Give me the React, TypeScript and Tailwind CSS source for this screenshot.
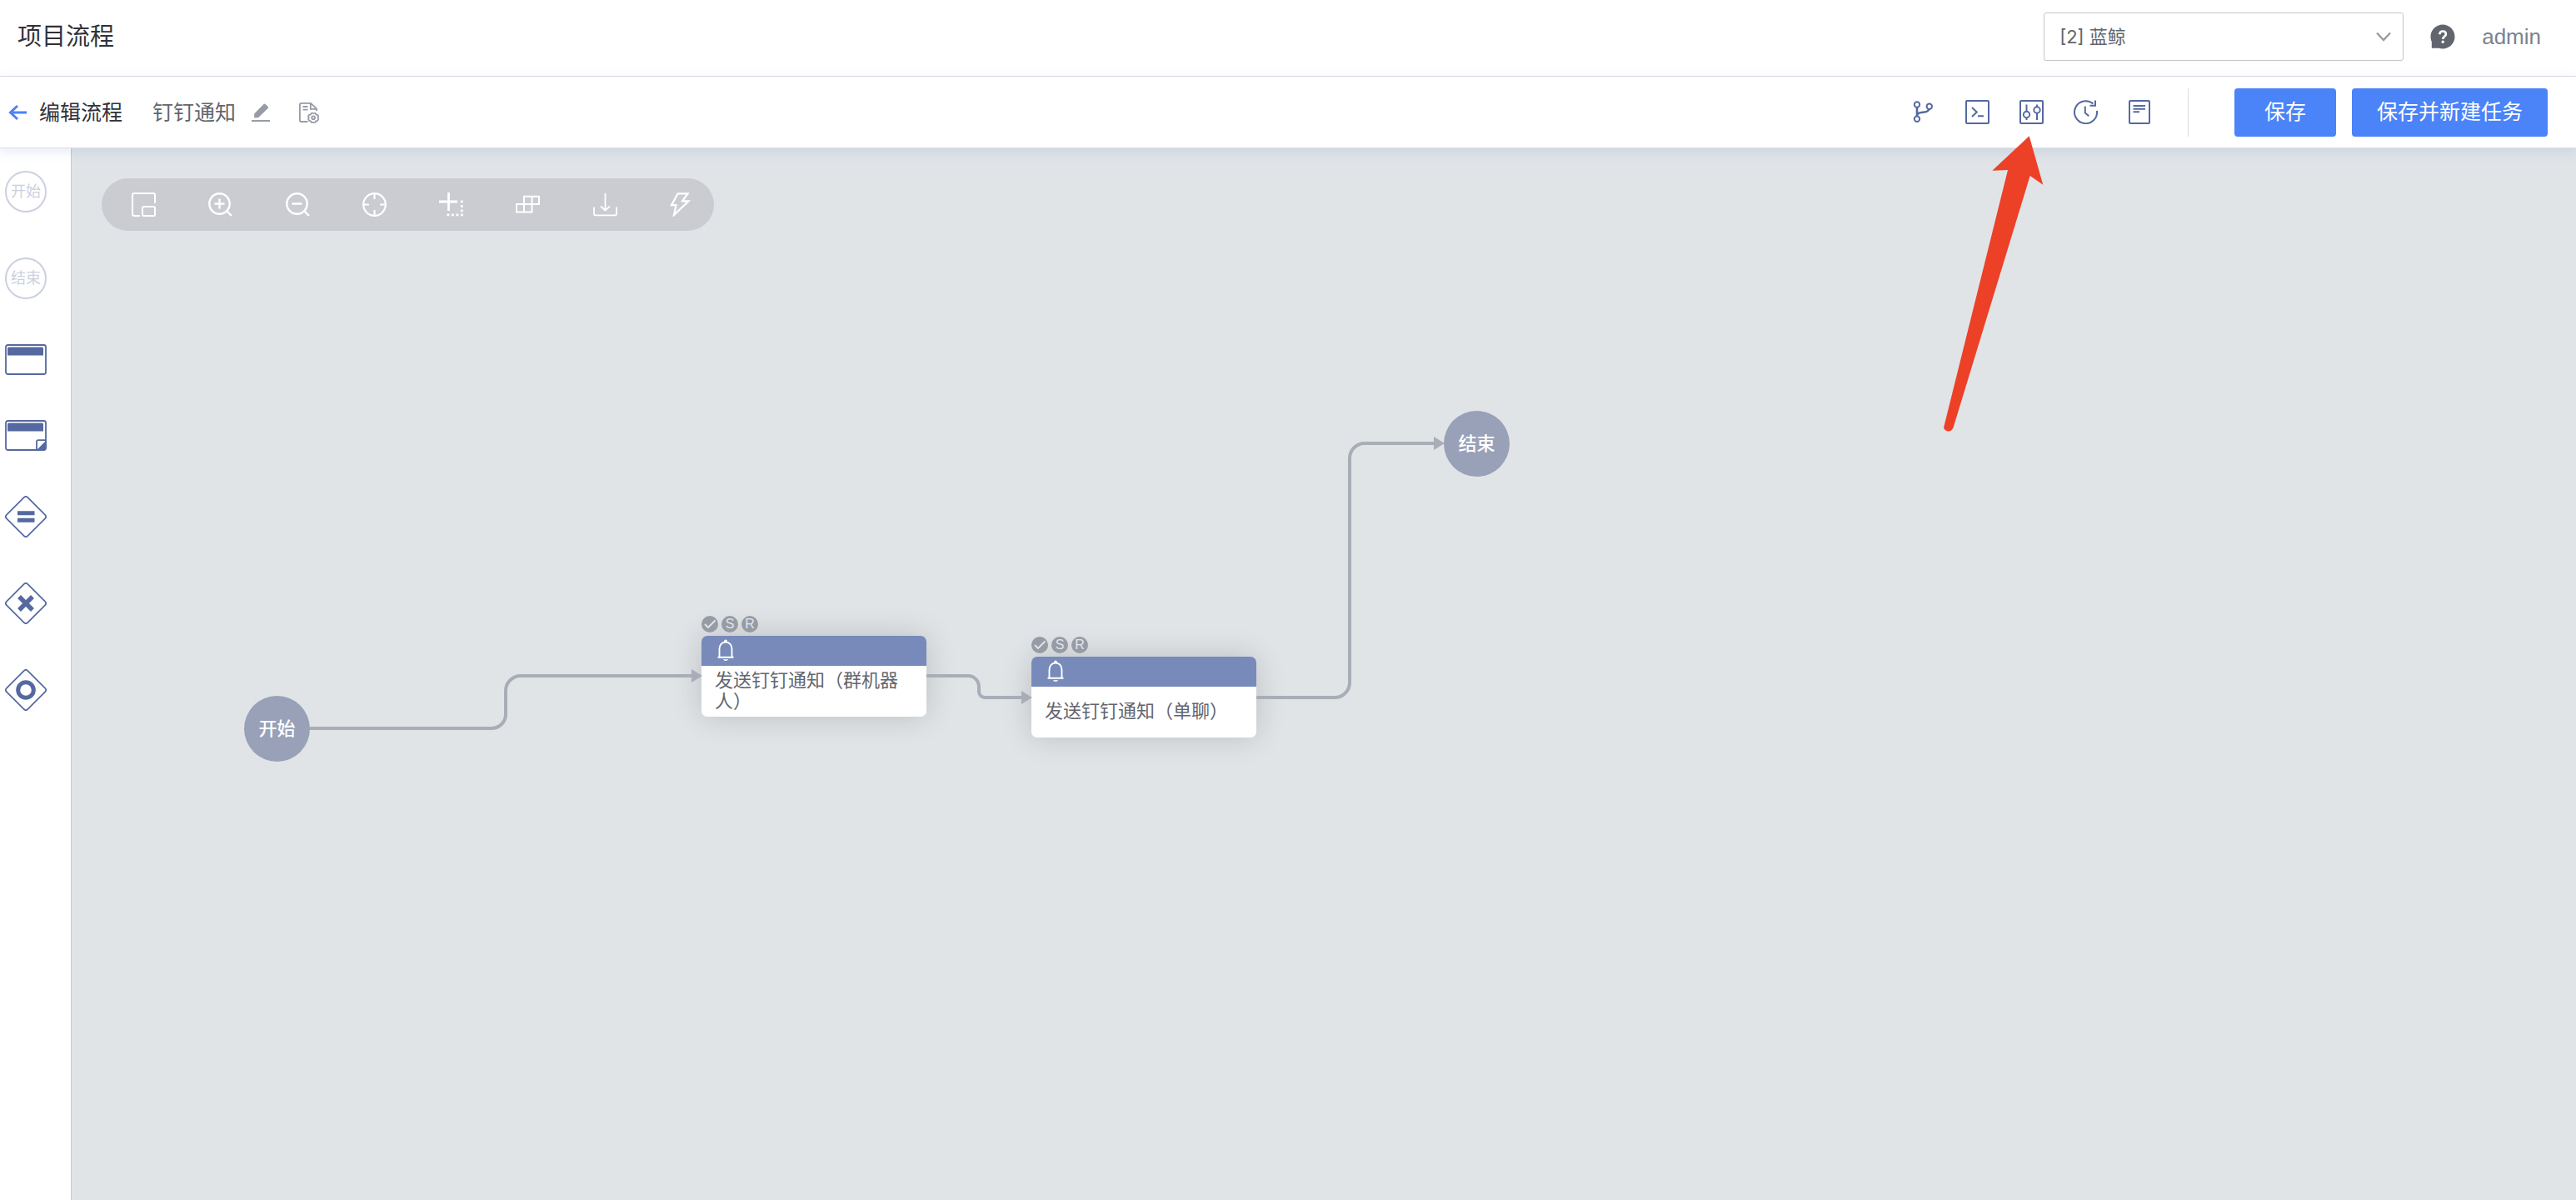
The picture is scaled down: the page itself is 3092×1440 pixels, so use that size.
import type { ReactNode } from "react";

const FONT = 'font-["Liberation_Sans","Noto_Sans_CJK_SC",sans-serif]';

function Glyph({ children, size = "size-[29px]", sw = 2 }: { children: ReactNode; size?: string; sw?: number }) {
  return (
    <svg viewBox="0 0 29 29" className={size} fill="none" stroke="currentColor" strokeWidth={sw} aria-hidden="true">
      {children}
    </svg>
  );
}

function IconButton({ label, children }: { label: string; children: ReactNode }) {
  return (
    <button type="button" aria-label={label} title={label} className="flex shrink-0 items-center justify-center">
      {children}
    </button>
  );
}

function TopHeader() {
  return (
    <header className="flex h-[92px] shrink-0 items-center border-b border-[#dcdee5] bg-white pb-[3px] pl-[21px] pr-[42px]">
      <h1 className="text-[29px] leading-10 text-[#313238]">项目流程</h1>
      <div className="relative ml-auto w-[432px]">
        <select
          aria-label="项目"
          className='h-[58px] w-full appearance-none rounded-[3px] border border-[#c4c6cc] bg-white pl-[18px] pr-12 font-["Inter","Noto_Sans_CJK_SC",sans-serif] text-[22px] text-[#63656e]'
        >
          <option>[2] 蓝鲸</option>
        </select>
        <svg viewBox="0 0 18 12" className="pointer-events-none absolute right-[15px] top-[23px] h-3 w-[18px]" fill="none" stroke="#979ba5" strokeWidth="2.4">
          <path d="M1 1.5 9 10l8-8.5" />
        </svg>
      </div>
      <button type="button" aria-label="帮助" className="ml-8">
        <svg viewBox="0 0 30 30" className="size-[30px]" aria-hidden="true">
          <path d="M15 .5C23 .5 29.500 7 29.500 15S23 29.500 15 29.500c-1.700 0-3.300-.3-4.800-.8H1.800V21C.9 19.200.5 17.200.5 15 .5 7 7 .5 15 .5Z" fill="#63656e" />
          <path d="M11.300 12.200c0-2.200 1.500-3.700 3.800-3.700s3.800 1.400 3.800 3.400c0 2.800-3.700 2.900-3.700 6" fill="none" stroke="#fff" strokeWidth="2.600" />
          <circle cx="15.200" cy="21.300" r="1.700" fill="#fff" />
        </svg>
      </button>
      <a href="#user" className="ml-8 text-[26px] leading-9 text-[#7c828e]">admin</a>
    </header>
  );
}

function EditBar() {
  return (
    <div className="relative z-10 flex h-[86px] shrink-0 items-center border-b border-[#dcdee5] bg-white pl-[10px] pr-[34px] shadow-[0_4px_14px_rgba(80,110,200,0.14)]">
      <IconButton label="返回">
        <svg viewBox="0 0 22 20" className="h-5 w-[22px]" fill="none" stroke="#4b83f9" strokeWidth="3">
          <path d="M2 10h20M11 2l-8.500 8 8.500 8" />
        </svg>
      </IconButton>
      <h2 className="ml-[15px] text-[25px] leading-9 text-[#313238]">编辑流程</h2>
      <span className="ml-9 text-[25px] leading-9 text-[#63656e]">钉钉通知</span>
      <div className="ml-[19px] flex items-center gap-[34px] text-[#979ba5]">
        <IconButton label="编辑名称">
          <svg viewBox="0 0 22 24" className="h-6 w-[22px]" fill="currentColor">
            <path d="M3.200 18.500v-5L14.500 2a1.500 1.500 0 0 1 2.100 0l3 3a1.500 1.500 0 0 1 0 2.100L8.200 18Z" />
            <path d="M0 21h22v2H0z" />
          </svg>
        </IconButton>
        <IconButton label="流程属性">
          <svg viewBox="0 0 26 26" className="size-[26px]" fill="none" stroke="currentColor" strokeWidth="1.800">
            <path d="M11.500 24H3.500A1.600 1.600 0 0 1 1.900 22.400V3.500a1.600 1.600 0 0 1 1.600-1.600H15l7 6.600v2.500M14.800 2v6.800h7M5.500 6h6M5.500 9.600h6" />
            <path d="m15.800 13.900 4.600 0 .9 1.500 1.900.5 1 1.700-.7 1.700.7 1.700-1 1.800-1.900.5-.9 1.500h-4.600l-.9-1.500-1.900-.5-1-1.800.7-1.700-.7-1.700 1-1.700 1.900-.5Z" />
            <circle cx="18.100" cy="19.300" r="1.900" />
          </svg>
        </IconButton>
      </div>

      <div className="ml-auto flex items-center gap-9 text-[#5569a0]">
        <IconButton label="分支">
          <Glyph>
            <circle cx="7" cy="5.500" r="3.200" />
            <circle cx="21.800" cy="7.700" r="3.200" />
            <circle cx="7" cy="22.700" r="3.200" />
            <path d="M7 8.700v10.800M7.200 18c1.500-5.500 12.500-.8 14.300-7" strokeWidth="2.600" />
          </Glyph>
        </IconButton>
        <IconButton label="本地快照">
          <Glyph>
            <rect x="1" y="1" width="27" height="27" rx="1" />
            <path d="m8 9 5.800 5.500L8 20M15 19.300h7" />
          </Glyph>
        </IconButton>
        <IconButton label="全局变量">
          <Glyph>
            <rect x="1" y="1" width="27" height="27" rx="1" />
            <circle cx="8.500" cy="17.500" r="3.700" />
            <circle cx="21" cy="12" r="3.700" />
            <path d="M8.500 5.500v8.300M8.500 21.200V24M21 5.500v2.800M21 15.700V24" />
          </Glyph>
        </IconButton>
        <IconButton label="历史记录">
          <Glyph>
            <path d="M27.900 12.800A13.500 13.500 0 1 1 23.500 4.600M26 .5v6.300h-6.500M13.800 7.500v8l4.500 3.800" />
          </Glyph>
        </IconButton>
        <IconButton label="流程模板">
          <Glyph>
            <rect x="2" y="1" width="24" height="27" rx="1" />
            <path d="M6.500 7h14.500M6.500 10.800h14.500M6.500 14.300h7.500" />
          </Glyph>
        </IconButton>
      </div>
      <div className="ml-[43px] h-[58px] w-px bg-[#dcdee5]" />
      <button type="button" className="ml-[55px] h-[58px] rounded-[4px] bg-[#4b83f9] px-9 text-[25px] text-white">保存</button>
      <button type="button" className="ml-[19px] h-[58px] rounded-[4px] bg-[#4b83f9] px-[30px] text-[25px] text-white">保存并新建任务</button>
    </div>
  );
}

function Diamond({ children }: { children: ReactNode }) {
  return (
    <svg viewBox="0 0 50 50" className="size-[50px]" fill="none" stroke="#5569a0" strokeWidth="1.800">
      <path d="M22.800 1.800a3 3 0 0 1 4.400 0l21 21a3 3 0 0 1 0 4.400l-21 21a3 3 0 0 1-4.400 0l-21-21a3 3 0 0 1 0-4.400Z" />
      {children}
    </svg>
  );
}

function TaskShape({ folded = false }: { folded?: boolean }) {
  return (
    <svg viewBox="0 0 50 37" className="h-[37px] w-[50px]" fill="none" stroke="#5569a0" strokeWidth="1.800">
      <rect x="1" y="1" width="48" height="35" rx="2.500" />
      <path d="M3 13.500V5a1.500 1.500 0 0 1 1.500-1.500h40A1.500 1.500 0 0 1 46 5v8.500Z" fill="#5569a0" stroke="none" />
      {folded && (
        <>
          <path d="M38 35.500V26a1.800 1.800 0 0 1 1.800-1.800H49" />
          <path d="M38 36 49.500 24.500V33a3 3 0 0 1-3 3Z" fill="#5569a0" stroke="none" />
        </>
      )}
    </svg>
  );
}

function Palette() {
  return (
    <nav aria-label="节点" className="flex w-[86px] shrink-0 flex-col items-start gap-[54px] border-r border-[#c4c9da] bg-white pl-[6px] pt-[27px]">
      {["开始", "结束"].map((name) => (
        <button key={name} type="button" className="flex size-[50px] items-center justify-center rounded-full border-2 border-[#ccd0e0] text-[18px] leading-6 text-[#ccd0e0]">
          <span className="shrink-0 whitespace-nowrap">{name}</span>
        </button>
      ))}
      <IconButton label="标准插件"><TaskShape /></IconButton>
      <IconButton label="子流程"><TaskShape folded /></IconButton>
      <IconButton label="并行网关">
        <Diamond><path d="M15 20.800h20.500M15 29.300h20.500" strokeWidth="5" /></Diamond>
      </IconButton>
      <IconButton label="分支网关">
        <Diamond><path d="m17 17 16 16M33 17 17 33" strokeWidth="5.500" /></Diamond>
      </IconButton>
      <IconButton label="汇聚网关">
        <Diamond><circle cx="25" cy="25" r="9.300" strokeWidth="5" /></Diamond>
      </IconButton>
    </nav>
  );
}

function CanvasTools() {
  return (
    <div role="toolbar" aria-label="画布工具" className="absolute left-9 top-9 flex h-[63px] w-[735px] items-center justify-between rounded-full bg-[#cbccd1] pl-9 pr-6 text-white">
      <IconButton label="缩略视图">
        <Glyph>
          <path d="M28 13V3a2 2 0 0 0-2-2H3a2 2 0 0 0-2 2v23a2 2 0 0 0 2 2h7" />
          <rect x="13" y="17" width="15" height="11" rx="1.500" />
        </Glyph>
      </IconButton>
      <IconButton label="放大">
        <Glyph sw={2.4}>
          <circle cx="13.500" cy="13.500" r="12.200" />
          <path d="m22 22 6 6M7.500 13.500h12M13.500 7.500v12" />
        </Glyph>
      </IconButton>
      <IconButton label="缩小">
        <Glyph sw={2.4}>
          <circle cx="13.500" cy="13.500" r="12.200" />
          <path d="m22 22 6 6M7.500 13.500h12" />
        </Glyph>
      </IconButton>
      <IconButton label="复位">
        <Glyph sw={2.2}>
          <circle cx="14.500" cy="14.500" r="13.300" />
          <path d="M14.500 1v7M14.500 21v7M1 14.500h7M21 14.500h7" />
        </Glyph>
      </IconButton>
      <IconButton label="框选">
        <Glyph sw={2.8}>
          <path d="M11.500 0v22M0 11h22" />
          <path d="M9.500 26.800h19.300M27.300 9.500v14" strokeDasharray="2.800 2.700" />
        </Glyph>
      </IconButton>
      <IconButton label="排版">
        <Glyph sw={2}>
          <path d="M1 14h18.500v9.500H1ZM10 4.800h18V14H10ZM10 14v9.500M19.500 4.800V14" />
        </Glyph>
      </IconButton>
      <IconButton label="导出">
        <Glyph sw={1.800}>
          <path d="M1 17.500v8a1.800 1.800 0 0 0 1.800 1.800h23.400a1.800 1.800 0 0 0 1.800-1.800v-8M14.500 1v20.500M9 16.500l5.500 5 5.500-5" />
        </Glyph>
      </IconButton>
      <IconButton label="快捷键">
        <Glyph sw={2.200}>
          <path d="M9.500 1.300h12l-6.500 9h7.500L5 27l2.500-11.800H2Z" />
        </Glyph>
      </IconButton>
    </div>
  );
}

function Terminal({ name, place }: { name: string; place: string }) {
  return (
    <div className={`absolute flex size-[79px] items-center justify-center rounded-full bg-[#99a1b8] text-[22px] font-medium text-white ${place}`}>
      {name}
    </div>
  );
}

function TaskNode({ name, place }: { name: string; place: string }) {
  return (
    <article className={`absolute w-[270px] ${place}`}>
      <div className="absolute bottom-full left-0 z-10 flex gap-1 pb-1">
        <span className="flex size-5 items-center justify-center rounded-full bg-[#979ba5]">
          <svg viewBox="0 0 20 20" className="size-5" fill="none" stroke="#e3e5e9" strokeWidth="1.800">
            <path d="m4 10 4 4 8.500-8.500" />
          </svg>
        </span>
        {["S", "R"].map((c) => (
          <span key={c} className="flex size-5 items-center justify-center rounded-full bg-[#979ba5] text-[16px] leading-5 text-[#e3e5e9]">{c}</span>
        ))}
      </div>
      <div className="overflow-hidden rounded-[7px] shadow-[0_0_36px_rgba(0,0,0,0.16)]">
        <div className="flex h-9 items-center bg-[#788aba] pb-0.5 pl-[19px] text-white">
          <svg viewBox="0 0 20 27" className="h-[27px] w-5" fill="none" stroke="currentColor" strokeWidth="1.900">
            <path d="M.5 21.800h19M2.500 21.500V12c0-5 3-8.500 7.500-8.500s7.500 3.500 7.500 8.500v9.500" />
            <path d="M8 3.700a2 3.200 0 0 1 4 0ZM6.800 24.300a3.400 2.500 0 0 0 6.400 0Z" fill="currentColor" stroke="none" />
          </svg>
        </div>
        <div className="flex h-[61px] items-center bg-white px-4 pb-0.5 text-[22px] leading-[25px] text-[#63656e]">
          <p>{name}</p>
        </div>
      </div>
    </article>
  );
}

function Canvas() {
  return (
    <main className="relative min-h-[1262px] min-w-0 flex-1 overflow-hidden bg-[#e0e4e7]">
      <TaskNode name="发送钉钉通知（群机器人）" place="left-[756px] top-[585px]" />
      <TaskNode name="发送钉钉通知（单聊）" place="left-[1152px] top-[610px]" />
      <svg viewBox="0 0 1750 760" className="pointer-events-none absolute left-0 top-0 h-[760px] w-[1750px]" fill="none" stroke="#a9adb7" strokeWidth="4" aria-hidden="true">
        <path d="M286 696H504a17 17 0 0 0 17-17V651a18 18 0 0 1 18-18H746" />
        <path d="M1026 633h50a13 13 0 0 1 13 13v6a7 7 0 0 0 7 7h46" />
        <path d="M1422 659h94a18 18 0 0 0 18-18V372a18 18 0 0 1 18-18h86" />
        <path d="m744 625 13 8-13 8ZM1140 651l13 8-13 8ZM1635 346l13 8-13 8Z" fill="#a9adb7" stroke="none" />
      </svg>
      <Terminal name="开始" place="left-[207px] top-[657px]" />
      <Terminal name="结束" place="left-[1647px] top-[315px]" />
      <CanvasTools />
    </main>
  );
}

export default function App() {
  return (
    <div className={`relative flex min-h-screen flex-col bg-white ${FONT}`}>
      <TopHeader />
      <EditBar />
      <div className="flex flex-1">
        <Palette />
        <Canvas />
      </div>
      <svg viewBox="0 0 126 360" className="pointer-events-none absolute right-[636px] top-[160px] z-20 h-[360px] w-[126px]" aria-hidden="true">
        <path d="M105.700 3.300 61.300 44.700 80 44 3 353.300c1 3 3.500 4.200 6 4.200s4.500-1.700 5.700-4.800L106.700 51l15.600 10.700Z" fill="#ec4127" />
      </svg>
    </div>
  );
}
